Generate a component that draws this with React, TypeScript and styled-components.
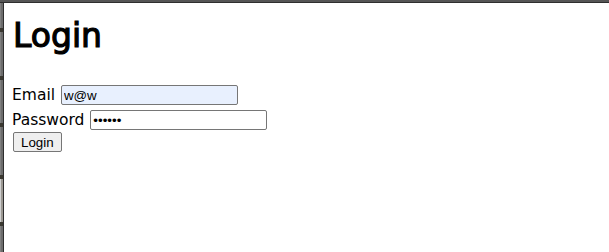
import React from "react";
import styled, { createGlobalStyle } from "styled-components";

const Global = createGlobalStyle`
  html, body { margin: 0; padding: 0; background: #ffffff; }
  body { font-family: "DejaVu Sans", "Liberation Sans", sans-serif; color: #000; }
`;

const Frame = styled.div`
  display: grid;
  grid-template-columns: 4px 1fr;
  grid-template-rows: 3px 1fr;
  width: 609px;
  height: 252px;
  overflow: hidden;
`;

const TopBar = styled.div`
  grid-column: 1 / 3;
  background: #555555;
  border-bottom: 1px solid #2e2e2e;
  box-sizing: border-box;
`;

const SideStrip = styled.div`
  display: flex;
  flex-direction: column;
  background: #3a3830;
  border-right: 1px solid #2e2e2e;
  box-sizing: border-box;
`;

const Segment = styled.div<{ $h: number; $light?: boolean }>`
  height: ${(p) => p.$h}px;
  flex: none;
  margin-bottom: 4px;
  background: ${(p) => (p.$light ? "#9b9892" : "#6c6c6c")};
  border-left: 1px solid ${(p) => (p.$light ? "#d0d0d0" : "#808080")};
  box-sizing: border-box;
`;

const Main = styled.main`
  padding: 0 8px;
`;

const Title = styled.h1`
  font-size: 33px;
  font-weight: normal;
  -webkit-text-stroke: 1.2px #000;
  margin: 14px 0 30px;
  padding-left: 1px;
  line-height: 38px;
`;

const Form = styled.form`
  display: flex;
  flex-direction: column;
  align-items: flex-start;
  font-size: 15.5px;
`;

const Row = styled.div<{ $mb: number }>`
  display: flex;
  align-items: baseline;
  margin-bottom: ${(p) => p.$mb}px;
  white-space: pre;
`;

const Field = styled.input<{ $filled?: boolean }>`
  box-sizing: border-box;
  width: 177px;
  height: 20px;
  margin: 0 0 0 1px;
  padding: 1px 2px;
  border: 1px solid #767676;
  border-radius: 2px;
  background: ${(p) => (p.$filled ? "#e8f0fe" : "#ffffff")};
  font-family: "Liberation Sans", Arial, sans-serif;
  font-size: 13.33px;
  color: #000;
  outline: none;
`;

const Button = styled.button`
  box-sizing: border-box;
  height: 20px;
  padding: 0 7px;
  margin: 0 0 0 1px;
  border: 1px solid #767676;
  border-radius: 2px;
  background: #efefef;
  font-family: "Liberation Sans", Arial, sans-serif;
  font-size: 13.33px;
  color: #000;
`;

export default function App() {
  return (
    <>
      <Global />
      <Frame>
        <TopBar />
        <SideStrip>
          <Segment $h={25} />
          <Segment $h={44} />
          <Segment $h={43} />
          <Segment $h={48} />
          <Segment $h={43} $light />
          <Segment $h={40} />
        </SideStrip>
        <Main>
          <Title>Login</Title>
          <Form onSubmit={(e) => e.preventDefault()}>
            <Row $mb={5}>
              {"Email "}
              <Field $filled type="text" defaultValue="w@w" readOnly />
            </Row>
            <Row $mb={2}>
              {"Password "}
              <Field type="password" defaultValue="abcdef" readOnly />
            </Row>
            <Button type="submit">Login</Button>
          </Form>
        </Main>
      </Frame>
    </>
  );
}
